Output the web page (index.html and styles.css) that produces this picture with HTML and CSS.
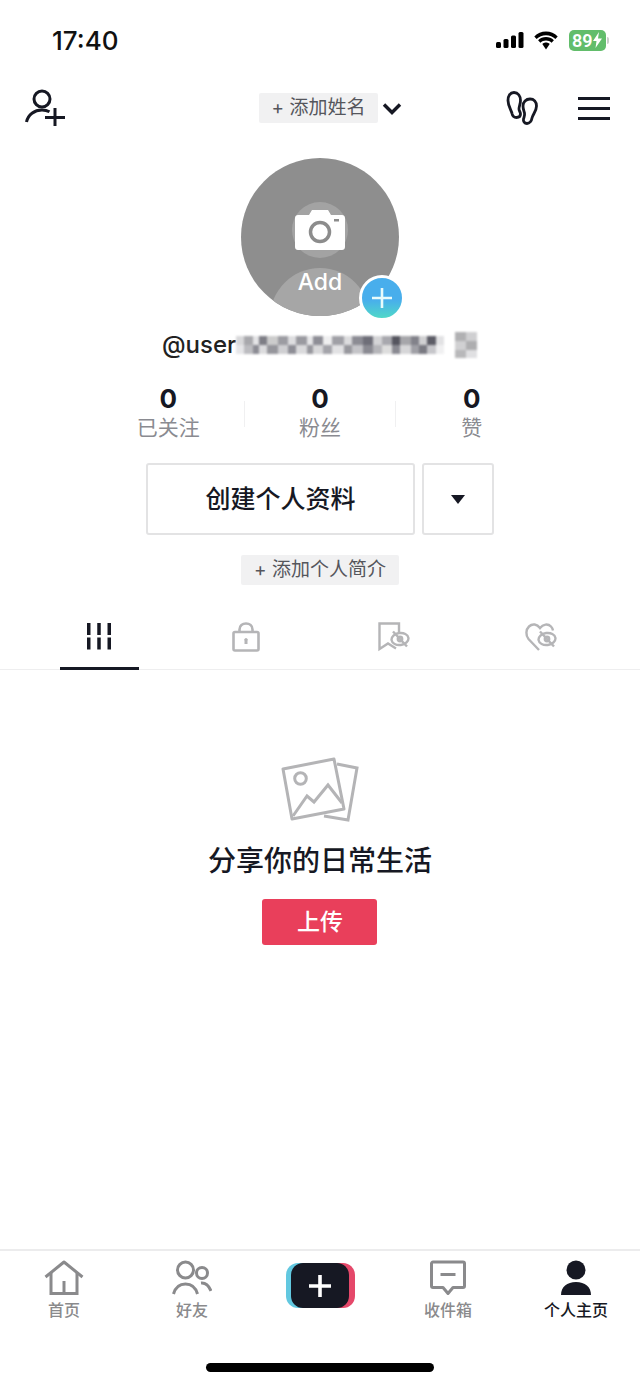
FILE: index.html
```html
<!DOCTYPE html>
<html lang="zh-CN">
<head>
    <meta charset="UTF-8">
    <meta name="viewport" content="width=device-width, initial-scale=1.0">
    <title>个人主页</title>
    <link rel="stylesheet" href="styles.css">
</head>
<body>
    <div class="page">
        <!-- status bar -->
        <div class="status-bar">
            <span class="status-time">17:40</span>
            <div class="status-icons">
                <svg width="28" height="16" viewBox="0 0 28 16" fill="#000"><rect x="0" y="10" width="5" height="6" rx="1.5"/><rect x="7.5" y="7" width="5" height="9" rx="1.5"/><rect x="15" y="3.5" width="5" height="12.5" rx="1.5"/><rect x="22.5" y="0" width="5" height="16" rx="1.5"/></svg>
                <svg width="26" height="19" viewBox="0 0 26 19" fill="#000"><path d="M13 4.2c3.6 0 6.9 1.4 9.400 3.700l2.300-2.500C21.600 2.400 17.500.6 13 .6S4.400 2.400 1.300 5.400l2.300 2.500C6.100 5.600 9.400 4.200 13 4.200z"/><path d="M13 9.500c2.100 0 4.100.8 5.600 2.200l2.300-2.500c-2.100-2-4.900-3.200-7.900-3.200s-5.800 1.200-7.900 3.200l2.300 2.500c1.500-1.400 3.500-2.200 5.600-2.200z"/><path d="M13 11.500c-1.400 0-2.700.5-3.700 1.500L13 18.500l3.700-5.500c-1-1-2.300-1.500-3.700-1.500z"/></svg>
                <div class="battery"><span class="battery-level">89</span><svg width="9" height="16" viewBox="0 0 9 16" fill="#fff"><path d="M6 0 0 9h3.500L2.500 16 9 6.500H5z"/></svg></div>
                <span class="battery-nub"></span>
            </div>
        </div>

        <!-- top nav -->
        <div class="top-nav">
            <svg class="nav-left" width="42" height="38" viewBox="0 0 42 38" fill="none" stroke="#161823" stroke-width="3"><circle cx="17" cy="10" r="8"/><path d="M1.500 33c1.500-7.500 8-12 15.500-12 3 0 5.500.7 7.500 1.800"/><path d="M20 28.500h20M30 19v18"/></svg>
            <div class="name-group">
                <span class="add-pill">+ 添加姓名</span>
                <svg width="20" height="13" viewBox="0 0 20 13" fill="none" stroke="#161823" stroke-width="3.400"><path d="M2 2.500l8 8 8-8"/></svg>
            </div>
            <div class="nav-right">
                <svg width="32" height="34" viewBox="0 0 32 34" fill="none" stroke="#161823" stroke-width="2.800"><path d="M8 1.500C12 1.500 14.500 5 14.500 9.500 14.500 13 13 15 13 18 13 20 14.500 21 14.500 23 14.500 25.500 12.500 26.500 10.500 26.500 8 26.500 6.500 25 6 22.500 5.500 19.500 2 15 2 9.500 2 5 4 1.500 8 1.500z"/><path d="M24 8C28 8 30.500 11 30.500 15 30.500 20 27 23 26 27 25.500 30 23.500 32.500 21 32.500 18.500 32.500 17 30.500 17.500 28 18 26 19 25 18.500 22 18 20 17 18 17 15 17 11 20 8 24 8z"/></svg>
                <div class="menu-icon"><span></span><span></span><span></span></div>
            </div>
        </div>

        <!-- avatar -->
        <div class="avatar-wrap">
            <div class="avatar">
                <div class="camera-halo">
                    <svg width="50" height="40" viewBox="0 0 50 40"><path fill="#fff" d="M3 5h11l3-5h16l3 5h11c1.700 0 3 1.300 3 3v29c0 1.700-1.300 3-3 3H3c-1.700 0-3-1.300-3-3V8c0-1.700 1.300-3 3-3z"/><circle cx="25" cy="22" r="9.500" fill="none" stroke="#8c8c8c" stroke-width="3.500"/><rect x="39" y="9" width="5" height="2.500" fill="#8c8c8c"/></svg>
                </div>
                <span class="avatar-add">Add</span>
            </div>
            <div class="avatar-badge">
                <svg width="22" height="22" viewBox="0 0 22 22" stroke="#e8fbfb" stroke-width="2.600"><path d="M1 11h20M11 1v20"/></svg>
            </div>
        </div>

        <div class="username">
            <span>@user</span>
            <span class="mosaic mosaic-id"></span>
            <span class="mosaic mosaic-tag"></span>
        </div>

        <!-- counts -->
        <div class="stats">
            <div class="stat"><strong>0</strong><span>已关注</span></div>
            <div class="stat-line"></div>
            <div class="stat"><strong>0</strong><span>粉丝</span></div>
            <div class="stat-line"></div>
            <div class="stat"><strong>0</strong><span>赞</span></div>
        </div>

        <div class="actions">
            <div class="action-button action-main">创建个人资料</div>
            <div class="action-button action-more"><span class="triangle"></span></div>
        </div>

        <span class="add-pill add-bio">+ 添加个人简介</span>

        <!-- tabs -->
        <div class="tabs">
            <div class="tab tab-active">
                <svg width="26" height="28" viewBox="0 0 26 28" fill="#161823"><rect x="1" y="1" width="3.500" height="12"/><rect x="11.250" y="1" width="3.500" height="12"/><rect x="21.500" y="1" width="3.500" height="12"/><rect x="1" y="15.500" width="3.500" height="12"/><rect x="11.250" y="15.500" width="3.500" height="12"/><rect x="21.500" y="15.500" width="3.500" height="12"/></svg>
            </div>
            <div class="tab">
                <svg width="28" height="30" viewBox="0 0 28 30" fill="none" stroke="#b5b5b7" stroke-width="2.600"><rect x="1.500" y="10" width="25" height="18.500" rx="1.500"/><path d="M7.500 10V7.500C7.500 3.500 10.500 1.500 14 1.500s6.500 2 6.500 6V10"/><path d="M14 17v5" stroke-width="3"/><circle cx="14" cy="17.500" r="1.500" fill="#b5b5b7" stroke="none"/></svg>
            </div>
            <div class="tab">
                <svg width="32" height="30" viewBox="0 0 32 30" fill="none" stroke="#b5b5b7" stroke-width="2.400"><path d="M21 10V1.500H1.500v25.500L10 21.500l8 5"/><ellipse cx="22" cy="17" rx="8.500" ry="6" transform="rotate(-8 22 17)"/><circle cx="22" cy="17" r="2.200"/><path d="M15 9.500l14 15"/></svg>
            </div>
            <div class="tab">
                <svg width="32" height="30" viewBox="0 0 32 30" fill="none" stroke="#b5b5b7" stroke-width="2.400"><path d="M14 28 3.500 17C.5 13.500.8 7.500 4 4.500 7.500 1.200 12 2 15 6c3-4 8-4.500 11-1.500 1 1 1.700 2.500 2 4"/><ellipse cx="22" cy="17" rx="8.500" ry="6" transform="rotate(-8 22 17)"/><circle cx="22" cy="17" r="2.200"/><path d="M15 9.500l14 15"/></svg>
            </div>
        </div>

        <!-- empty state -->
        <div class="empty">
            <svg width="78" height="66" viewBox="0 0 78 66" fill="none" stroke="#b4b4b6" stroke-width="3"><path d="M2 12 53 2l10 50-52 10z" stroke-linejoin="round"/><path d="M56 7l20 4-9 52-24-4"/><circle cx="19.500" cy="21.500" r="5.800"/><path d="M12 59l14-20 7 6 14-17 14 18"/></svg>
            <h2 class="empty-title">分享你的日常生活</h2>
            <div class="upload-button">上传</div>
        </div>

        <!-- bottom tab bar -->
        <div class="tab-bar">
            <div class="tab-row">
                <div class="tab-item">
                    <svg width="40" height="36" viewBox="0 0 40 36" fill="none" stroke="#8a8a8c" stroke-width="3"><path d="M1.500 17 20 2l18.500 15" stroke-linejoin="round"/><path d="M7 13v20.500h26V13"/><path d="M20 33V21"/></svg>
                    <span>首页</span>
                </div>
                <div class="tab-item">
                    <svg width="40" height="36" viewBox="0 0 40 36" fill="none" stroke="#8a8a8c" stroke-width="3"><circle cx="13.500" cy="10" r="8"/><circle cx="30" cy="13" r="5.500"/><path d="M1.500 34c2-7 6-10 12-10s10 3 12 10"/><path d="M29 23c4.500-.5 8 3 10 8"/></svg>
                    <span>好友</span>
                </div>
                <div class="tab-item">
                    <div class="create-button">
                        <svg width="24" height="24" viewBox="0 0 24 24" stroke="#fff" stroke-width="3.600"><path d="M1 12h22M12 1v22"/></svg>
                    </div>
                </div>
                <div class="tab-item">
                    <svg width="36" height="36" viewBox="0 0 36 36" fill="none" stroke="#8a8a8c" stroke-width="3"><path d="M3 2h30c.8 0 1.500.7 1.500 1.500V26c0 .8-.7 1.500-1.500 1.500H23l-5 6-5-6H3c-.8 0-1.500-.7-1.500-1.500V3.500C1.500 2.700 2.200 2 3 2z" stroke-linejoin="round"/><path d="M10.500 14.500h15"/></svg>
                    <span>收件箱</span>
                </div>
                <div class="tab-item tab-item-active">
                    <svg width="32" height="36" viewBox="0 0 32 36" fill="#161823"><circle cx="16" cy="10" r="9.500"/><path d="M1 35c0-8 6-13 15-13s15 5 15 13z"/></svg>
                    <span>个人主页</span>
                </div>
            </div>
            <div class="home-bar"></div>
        </div>
    </div>
</body>
</html>
```

FILE: styles.css
```css
* {
    box-sizing: border-box;
}
body {
    margin: 0;
    background: #fff;
    color: #161823;
    font-family: Inter, "Noto Sans CJK SC", sans-serif;
}
.page {
    width: 640px;
    height: 1385px;
    display: flex;
    flex-direction: column;
    align-items: center;
    overflow: hidden;
}

/* status bar */
.status-bar {
    width: 100%;
    height: 80px;
    padding: 0 31px 0 52px;
    display: flex;
    justify-content: space-between;
    align-items: center;
}
.status-time {
    font-size: 26px;
    font-weight: 500;
    color: #111;
}
.status-icons {
    display: flex;
    align-items: center;
}
.status-icons svg:first-child {
    margin-right: 9px;
}
.battery {
    width: 37px;
    height: 21px;
    margin-left: 10px;
    padding-left: 3px;
    background: #62bd6b;
    border-radius: 5px;
    display: flex;
    align-items: center;
}
.battery-level {
    color: #fff;
    font-size: 18px;
    font-weight: 600;
    line-height: 21px;
    font-family: Roboto, sans-serif;
}
.battery-nub {
    width: 2px;
    height: 7px;
    margin-left: 1px;
    background: #ccc;
    border-radius: 0 2px 2px 0;
}

/* top nav */
.top-nav {
    width: 100%;
    height: 56px;
    padding: 0 30px 0 25px;
    display: grid;
    grid-template-columns: 1fr auto 1fr;
    align-items: center;
}
.nav-right {
    display: flex;
    justify-content: flex-end;
    align-items: center;
    gap: 40px;
}
.name-group {
    display: flex;
    align-items: center;
    gap: 4px;
    margin-left: 26px;
}
.add-pill {
    height: 30px;
    padding: 0 13px;
    background: #f1f1f2;
    border-radius: 2px;
    color: #55565c;
    font-size: 19px;
    line-height: 30px;
}
.menu-icon {
    width: 32px;
    display: flex;
    flex-direction: column;
    gap: 7px;
}
.menu-icon span {
    height: 3px;
    background: #161823;
}

/* avatar */
.avatar-wrap {
    position: relative;
    width: 158px;
    height: 158px;
    margin-top: 22px;
}
.avatar {
    position: relative;
    width: 158px;
    height: 158px;
    padding-top: 44px;
    border-radius: 50%;
    background: #8e8e8e;
    overflow: hidden;
    display: flex;
    flex-direction: column;
    align-items: center;
}
.avatar::after {
    content: "";
    position: absolute;
    left: 29px;
    top: 110px;
    width: 100px;
    height: 100px;
    border-radius: 50%;
    background: #a6a6a6;
}
.camera-halo {
    width: 56px;
    height: 56px;
    border-radius: 50%;
    background: #a3a3a3;
    display: flex;
    align-items: center;
    justify-content: center;
}
.avatar-add {
    position: relative;
    z-index: 1;
    margin-top: 9px;
    color: #fff;
    font-size: 23px;
    font-weight: 500;
    line-height: 30px;
}
.avatar-badge {
    position: absolute;
    left: 118px;
    top: 117px;
    width: 46px;
    height: 46px;
    border: 3px solid #fff;
    border-radius: 50%;
    background: linear-gradient(#48aeec 55%, #50d8c8);
    display: flex;
    align-items: center;
    justify-content: center;
}

/* username */
.username {
    width: 100%;
    height: 30px;
    margin-top: 14px;
    padding-left: 162px;
    display: flex;
    align-items: center;
    font-size: 24px;
    font-weight: 500;
    color: #222;
    line-height: 30px;
}
.mosaic {
    display: block;
    height: 26px;
    filter: blur(0.8px);
}
.mosaic-id {
    width: 208px;
    background:
        linear-gradient(90deg, #d8d8da 0 4%, #a8a8ac 4% 8%, #e4e4e6 8% 11%, #7e7e86 11% 15%, #ccc 15% 20%, #9c9ca2 20% 25%, #dedee0 25% 29%, #9a9aa0 29% 34%, #e6e6e8 34% 37%, #8e8e96 37% 42%, #efeff0 42% 46%, #a0a0a6 46% 52%, #dcdcde 52% 56%, #8c8c94 56% 61%, #6e6e78 61% 66%, #d4d4d6 66% 70%, #a8a8ae 70% 75%, #55555f 75% 79%, #a6a6aa 79% 84%, #82828a 84% 88%, #d0d0d2 88% 92%, #5c5c66 92% 96%, #e2e2e4 96%) 0 4px / 100% 9px no-repeat,
        linear-gradient(90deg, #e6e6e8 0 4%, #bcbcc0 4% 8%, #8c8c94 8% 11%, #dcdcde 11% 15%, #96969c 15% 20%, #cfcfd2 20% 25%, #8e8e96 25% 29%, #dadadc 29% 34%, #98989e 34% 37%, #d8d8da 37% 42%, #a4a4aa 42% 46%, #e2e2e4 46% 52%, #98989e 52% 56%, #c4c4c8 56% 61%, #8a8a92 61% 66%, #b6b6ba 66% 70%, #ddd 70% 75%, #8a8a92 75% 79%, #d6d6d8 79% 84%, #a0a0a6 84% 88%, #7a7a82 88% 92%, #c6c6ca 92% 96%, #f0f0f1 96%) 0 13px / 100% 9px no-repeat;
}
.mosaic-tag {
    width: 22px;
    margin-left: 11px;
    background:
        linear-gradient(90deg, #b0b0b2 0 50%, #cfcfd1 50%) 0 0 / 100% 9px no-repeat,
        linear-gradient(90deg, #d0d0d2 0 50%, #aeaeb0 50%) 0 9px / 100% 9px no-repeat,
        linear-gradient(90deg, #b8b8ba 0 50%, #e0e0e2 50%) 0 18px / 100% 8px no-repeat;
}

/* counts */
.stats {
    width: 100%;
    margin-top: 24px;
    padding: 0 93px;
    display: grid;
    grid-template-columns: 1fr 1px 1fr 1px 1fr;
    align-items: center;
    text-align: center;
}
.stat {
    display: flex;
    flex-direction: column;
    align-items: center;
}
.stat strong {
    font-size: 26px;
    font-weight: 700;
    line-height: 30px;
}
.stat span {
    color: #8a8b91;
    font-size: 21px;
    line-height: 28px;
}
.stat-line {
    height: 26px;
    margin-top: 2px;
    background: #f0f0f1;
}

/* buttons */
.actions {
    margin-top: 21px;
    display: flex;
    gap: 7px;
}
.action-button {
    height: 72px;
    border: 2px solid #e3e3e4;
    border-radius: 3px;
    display: flex;
    align-items: center;
    justify-content: center;
}
.action-main {
    width: 269px;
    padding-bottom: 5px;
    font-size: 25px;
    font-weight: 500;
}
.action-more {
    width: 72px;
}
.triangle {
    width: 0;
    height: 0;
    border-left: 7px solid transparent;
    border-right: 7px solid transparent;
    border-top: 9px solid #161823;
}
.add-bio {
    margin-top: 20px;
    flex: none;
}

/* tabs */
.tabs {
    width: 100%;
    height: 85px;
    padding: 0 25px;
    border-bottom: 1px solid #eeeeef;
    display: grid;
    grid-template-columns: repeat(4, 1fr);
}
.tab {
    position: relative;
    padding-top: 37px;
    display: flex;
    justify-content: center;
}
.tab-active::after {
    content: "";
    position: absolute;
    left: 35px;
    bottom: -1px;
    width: 79px;
    height: 3px;
    background: #161823;
}

/* empty state */
.empty {
    margin-top: 87px;
    display: flex;
    flex-direction: column;
    align-items: center;
}
.empty-title {
    margin: 20px 0 0;
    font-size: 28px;
    font-weight: 500;
    line-height: 36px;
}
.upload-button {
    width: 115px;
    height: 46px;
    margin-top: 20px;
    border-radius: 3px;
    background: #e93f5b;
    color: #fff;
    font-size: 23px;
    font-weight: 500;
    line-height: 46px;
    text-align: center;
}

/* bottom tab bar */
.tab-bar {
    width: 100%;
    height: 136px;
    margin-top: auto;
    border-top: 2px solid #ececed;
    display: flex;
    flex-direction: column;
    align-items: center;
}
.tab-row {
    width: 100%;
    height: 112px;
    padding-top: 9px;
    display: grid;
    grid-template-columns: repeat(5, 128px);
}
.tab-item {
    display: flex;
    flex-direction: column;
    align-items: center;
}
.tab-item span {
    margin-top: 4px;
    color: #8a8a8c;
    font-size: 16px;
    font-weight: 500;
    line-height: 20px;
}
.tab-item-active span {
    color: #161823;
}
.create-button {
    width: 58px;
    height: 45px;
    margin-top: 3px;
    border-radius: 12px;
    background: #161823;
    box-shadow: -5px 0 0 #62c8e0, 6px 0 0 #e5486a;
    display: flex;
    align-items: center;
    justify-content: center;
}
.home-bar {
    width: 228px;
    height: 9px;
    border-radius: 5px;
    background: #000;
}
```
